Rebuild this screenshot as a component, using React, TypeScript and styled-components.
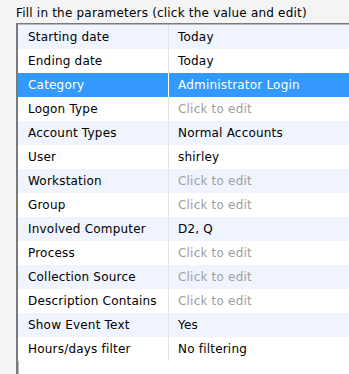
import styled, { createGlobalStyle } from 'styled-components';

const GlobalStyle = createGlobalStyle`
  html, body {
    margin: 0;
    padding: 0;
    background: #f4f4f4;
  }
  body {
    font-family: "DejaVu Sans", Verdana, sans-serif;
    font-size: 12px;
    letter-spacing: 0.2px;
    color: #000;
  }
`;

const PageStyled = styled.div`
  padding: 5px 0 0 16px;
  width: 333px;
  height: 369px;
  overflow: hidden;
`;

const TitleStyled = styled.div`
  height: 18px;
  line-height: 16px;
  white-space: nowrap;
`;

const GridStyled = styled.div`
  background: #fff;
  border-top: 1px solid #7a7a7a;
  border-left: 2px solid #7a7a7a;
  box-shadow: inset 1px 1px 0 #b8b8b8;
  padding-top: 1px;
  padding-bottom: 20px;
`;

const RowStyled = styled.div<{ $odd: boolean; $selected: boolean }>`
  display: grid;
  grid-template-columns: 150px 1px 1fr;
  height: 24px;
  align-items: center;
  background: ${(p) => (p.$selected ? '#3399ff' : p.$odd ? '#eff4fe' : '#fff')};
  color: ${(p) => (p.$selected ? '#fff' : '#000')};
`;

const LabelStyled = styled.div`
  padding-left: 10px;
  white-space: nowrap;
`;

const DividerStyled = styled.div<{ $selected: boolean }>`
  align-self: stretch;
  background: ${(p) => (p.$selected ? '#fff' : '#e3e3e3')};
`;

const ValueStyled = styled.div<{ $empty: boolean; $selected: boolean }>`
  padding-left: 9px;
  white-space: nowrap;
  color: ${(p) => (p.$selected ? '#fff' : p.$empty ? '#a0a0a0' : '#000')};
`;

type Param = { label: string; value?: string };

const params: Param[] = [
  { label: 'Starting date', value: 'Today' },
  { label: 'Ending date', value: 'Today' },
  { label: 'Category', value: 'Administrator Login' },
  { label: 'Logon Type' },
  { label: 'Account Types', value: 'Normal Accounts' },
  { label: 'User', value: 'shirley' },
  { label: 'Workstation' },
  { label: 'Group' },
  { label: 'Involved Computer', value: 'D2, Q' },
  { label: 'Process' },
  { label: 'Collection Source' },
  { label: 'Description Contains' },
  { label: 'Show Event Text', value: 'Yes' },
  { label: 'Hours/days filter', value: 'No filtering' },
];

const SELECTED = 2;

export default function App() {
  return (
    <>
      <GlobalStyle />
      <PageStyled>
        <TitleStyled>Fill in the parameters (click the value and edit)</TitleStyled>
        <GridStyled>
          {params.map((p, i) => {
            const selected = i === SELECTED;
            return (
              <RowStyled key={p.label} $odd={i % 2 === 0} $selected={selected}>
                <LabelStyled>{p.label}</LabelStyled>
                <DividerStyled $selected={selected} />
                <ValueStyled $empty={!p.value} $selected={selected}>
                  {p.value ?? 'Click to edit'}
                </ValueStyled>
              </RowStyled>
            );
          })}
        </GridStyled>
      </PageStyled>
    </>
  );
}
